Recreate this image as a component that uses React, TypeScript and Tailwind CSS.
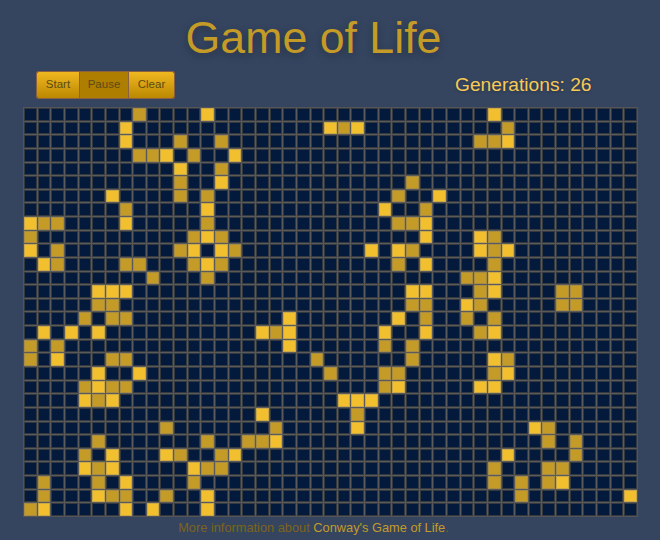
const ROWS = 30;
const COLS = 45;

// [live young cells, older cells] per row
const board: Record<number, [number[], number[]]> = {
  0: [[13, 34], [8]],
  1: [[7, 22, 24], [23, 35]],
  2: [[7, 35], [11, 14, 33, 34]],
  3: [[10, 15], [8, 9, 12]],
  4: [[11], [14]],
  5: [[14], [11, 28]],
  6: [[6, 30], [11, 13, 27]],
  7: [[13, 26], [7, 29]],
  8: [[0, 7, 29], [1, 2, 13, 27, 28]],
  9: [[13, 29, 33], [0, 12, 14, 34]],
  10: [[0, 12, 14, 25, 27, 33, 35], [2, 11, 15, 28, 34]],
  11: [[1, 13, 29], [2, 7, 8, 12, 14, 27, 34]],
  12: [[34], [9, 13, 32, 33]],
  13: [[5, 6, 7, 28, 29, 34], [33, 39, 40]],
  14: [[32], [5, 6, 28, 29, 33, 39, 40]],
  15: [[19, 27], [4, 6, 7, 29, 32, 34]],
  16: [[1, 3, 5, 17, 19, 26, 29, 34], [18, 33]],
  17: [[19], [0, 2, 26, 28]],
  18: [[2, 34], [0, 6, 7, 21, 28, 35]],
  19: [[5, 8, 35], [22, 26, 27, 34]],
  20: [[5, 27, 33, 34], [4, 6, 7, 26]],
  21: [[4, 6, 23, 24, 25], [5]],
  22: [[17], [24]],
  23: [[24, 37], [10, 18, 38]],
  24: [[18], [5, 13, 16, 17, 38, 40]],
  25: [[6, 10, 15, 35], [4, 11, 14, 40]],
  26: [[4, 6, 12], [5, 13, 14, 34, 38, 39]],
  27: [[7, 39], [1, 5, 12, 34, 36, 38]],
  28: [[5, 13, 44], [1, 6, 7, 10, 36]],
  29: [[1, 7, 9, 13], [0]],
};

function Cell({ row, col }: { row: number; col: number }) {
  const [young, old] = board[row];
  if (young.includes(col)) return <div className="border border-[#c9a84a] bg-[#f2bf2f]" />;
  if (old.includes(col)) return <div className="border border-[#a68c45] bg-[#c49b26]" />;
  return <div className="border border-[#34383f] bg-[#041a3c]" />;
}

export default function App() {
  return (
    <div className="h-[540px] w-[660px] overflow-hidden bg-[#354560] font-['Liberation_Sans',Arial,sans-serif]">
      <h1 className="w-[627px] pt-[11px] text-center text-[44.7px] leading-[54px] font-normal text-[#c49b26] [text-shadow:0_3px_8px_rgba(0,0,0,0.3)]">
        Game of Life
      </h1>
      <div className="mt-[6px] flex h-[28px] items-center pl-[36px]">
        <div className="flex h-[28px] rounded-[2px] border border-[#8a6040] text-[11.5px] text-[#5e4a14]">
          <button className="w-[42px] rounded-l-[2px] bg-gradient-to-b from-[#f0b81f] to-[#bb8800]">Start</button>
          <button className="w-[50px] border-x border-[#8a6040] bg-[#ad7e00]">Pause</button>
          <button className="w-[45px] rounded-r-[2px] bg-gradient-to-b from-[#f0b81f] to-[#bb8800]">Clear</button>
        </div>
        <span className="ml-[280px] text-[19.2px] text-[#f7ca55] [text-shadow:0_1px_3px_rgba(0,0,0,0.25)]">
          Generations: 26
        </span>
      </div>
      <div className="mt-[8px] ml-[23px] grid h-[410px] w-[615px] grid-cols-[repeat(45,minmax(0,1fr))] grid-rows-[repeat(30,minmax(0,1fr))] gap-px border border-[#555555] bg-[#5a5a5a]">
        {Array.from({ length: ROWS }).flatMap((_, row) =>
          Array.from({ length: COLS }).map((_, col) => <Cell key={`${row}-${col}`} row={row} col={col} />),
        )}
      </div>
      <p className="w-[627px] pt-[2px] text-center text-[12.8px] leading-[18px] text-[#7d6418]">
        More information about <a className="text-[#c49b26]">Conway's Game of Life</a>.
      </p>
    </div>
  );
}
